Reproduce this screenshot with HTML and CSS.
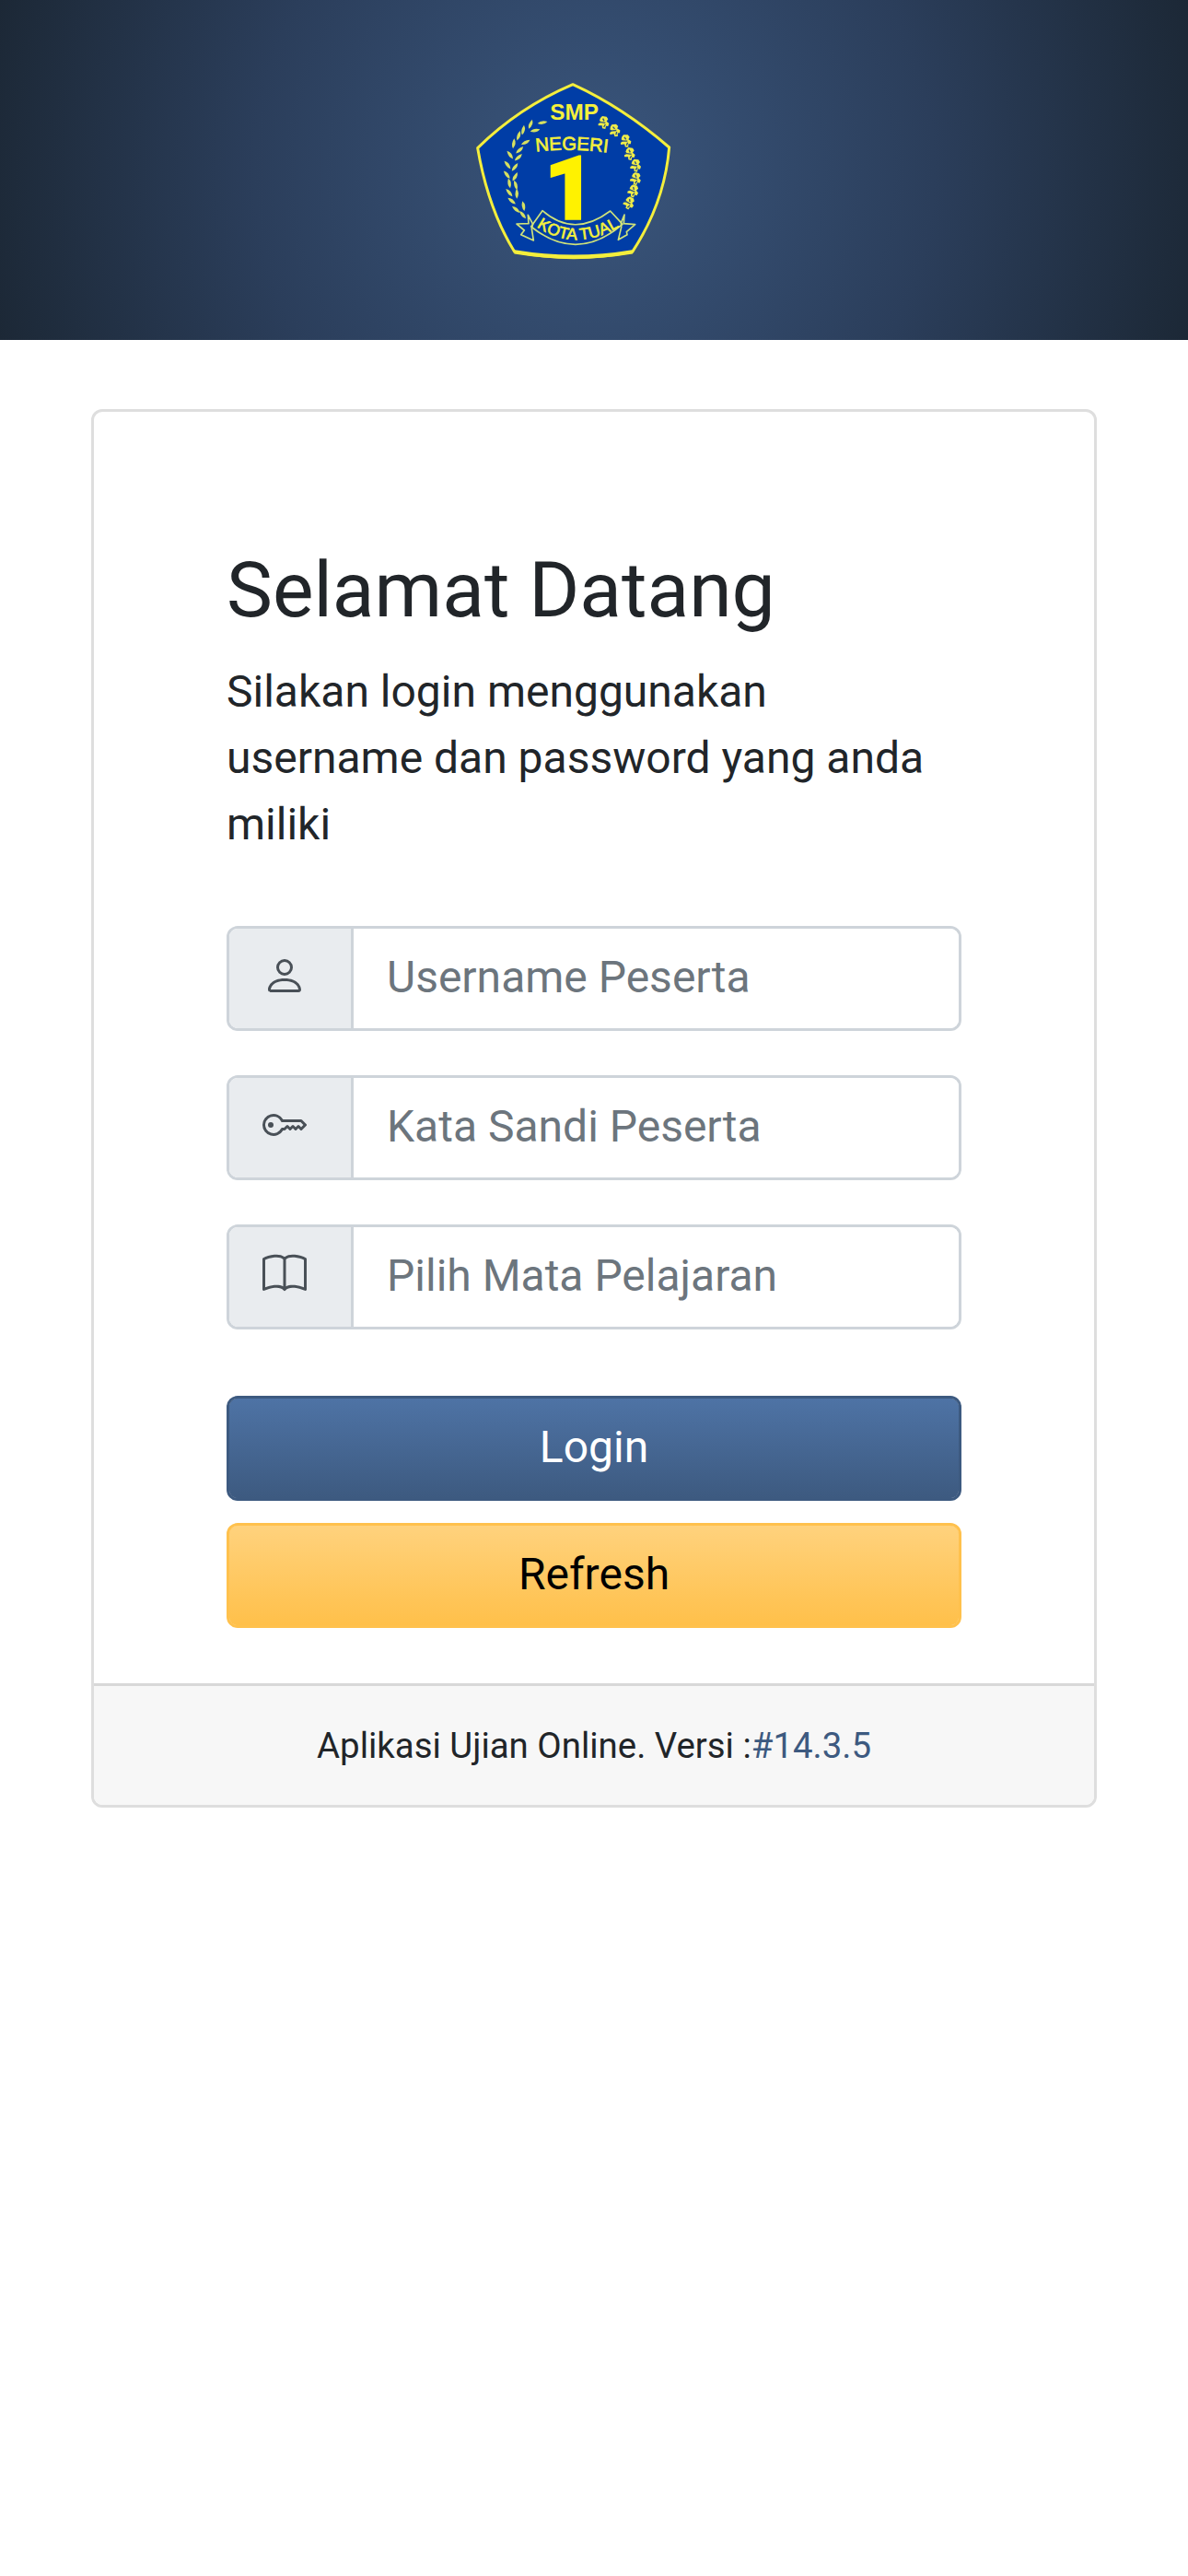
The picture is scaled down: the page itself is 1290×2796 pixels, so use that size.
FILE: index.html
```html
<!DOCTYPE html>
<html lang="id">
<head>
    <meta charset="utf-8">
    <meta name="viewport" content="width=device-width, initial-scale=1.0">
    <title>Login Peserta</title>
    <link rel="stylesheet" href="styles.css">
</head>
<body>
    <header class="banner">
        <svg class="logo" viewBox="0 0 720 630" role="img" aria-label="SMP Negeri 1 Kota Tual">
            <defs>
                <path id="arcTop" d="M246 254 Q365 240 500 260"/>
                <path id="arcRibbon" d="M248 498 Q384 592 546 480"/>
                <g id="leaf">
                    <path d="M-2 3 Q4 -12 26 -14 Q19 4 -2 3Z"/>
                </g>
                <g id="grain">
                    <path d="M-10 -16 L-4 -22 L10 -20 L15 -12 L10 -5 L18 2 L15 11 L8 10 L6 20 L-4 18 L-5 9 L-17 9 L-17 3 L-8 -2 L-13 -8Z"/>
                    <path class="vein" d="M-14 -3 L6 0 M-2 -14 L2 -6 M6 5 L1 14"/>
                </g>
            </defs>
            <path class="shield" d="M366 35 Q530 110 680 240 Q665 420 560 580 Q370 618 176 580 Q90 440 56 242 Q190 110 366 35Z"/>
            <path class="base" d="M176 580 Q370 612 560 580"/>

            <g class="leaves">
                <use href="#leaf" transform="translate(254 160) rotate(20)"/>
                <use href="#leaf" transform="translate(222 176) rotate(-38)"/>
                <use href="#leaf" transform="translate(230 186) rotate(18)"/>
                <use href="#leaf" transform="translate(200 196) rotate(-48)"/>
                <use href="#leaf" transform="translate(184 214) rotate(-42)"/>
                <use href="#leaf" transform="translate(200 228) rotate(2)"/>
                <use href="#leaf" transform="translate(170 240) rotate(-52)"/>
                <use href="#leaf" transform="translate(182 256) rotate(-12)"/>
                <use href="#leaf" transform="translate(168 276) rotate(-96)"/>
                <use href="#leaf" transform="translate(178 280) rotate(-12)"/>
                <use href="#leaf" transform="translate(160 308) rotate(-98)"/>
                <use href="#leaf" transform="translate(168 314) rotate(-22)"/>
                <use href="#leaf" transform="translate(158 340) rotate(-98)"/>
                <use href="#leaf" transform="translate(170 346) rotate(-30)"/>
                <use href="#leaf" transform="translate(160 370) rotate(-70)"/>
                <use href="#leaf" transform="translate(182 376) rotate(-76)"/>
                <use href="#leaf" transform="translate(166 398) rotate(-100)"/>
                <use href="#leaf" transform="translate(182 404) rotate(-60)"/>
                <use href="#leaf" transform="translate(176 424) rotate(-110)"/>
                <use href="#leaf" transform="translate(190 452) rotate(-110)"/>
                <use href="#leaf" transform="translate(206 444) rotate(-70)"/>
                <use href="#leaf" transform="translate(210 470) rotate(-100)"/>
            </g>

            <g class="grains">
                <use href="#grain" transform="translate(466 160)"/>
                <use href="#grain" transform="translate(502 186) rotate(-14)"/>
                <use href="#grain" transform="translate(538 220) rotate(-8)"/>
                <use href="#grain" transform="translate(551 262)"/>
                <use href="#grain" transform="translate(570 300)"/>
                <use href="#grain" transform="translate(570 343) rotate(8)"/>
                <use href="#grain" transform="translate(562 383) rotate(12)"/>
                <use href="#grain" transform="translate(548 422) rotate(20)"/>
            </g>

            <text class="logo-name" x="371" y="151">SMP</text>
            <text class="logo-arc"><textPath href="#arcTop">NEGERI</textPath></text>
            <text class="logo-number" x="356" y="473">1</text>

            <g class="ribbon">
                <path d="M267 446 Q370 536 488 447 L528 490 Q380 618 230 498Z"/>
                <path d="M236 490 L220 460 L222 488 L183 489 L208 510 L197 524 L238 543 L232 504 Z"/>
                <path d="M523 486 L534 459 L532 488 L569 491 L541 515 L543 524 L514 541 L524 500 Z"/>
            </g>
            <text class="logo-city"><textPath href="#arcRibbon">KOTA TUAL</textPath></text>
        </svg>
    </header>

    <main class="container">
        <div class="card">
            <form class="card-body">
                <h1>Selamat Datang</h1>
                <p class="intro">Silakan login menggunakan username dan password yang anda miliki</p>

                <div class="input-group">
                    <label class="addon" for="username" aria-label="Username Peserta">
                        <svg class="icon" viewBox="0 0 16 16"><path d="M8 8a3 3 0 1 0 0-6 3 3 0 0 0 0 6zm2-3a2 2 0 1 1-4 0 2 2 0 0 1 4 0zm4 8c0 1-1 1-1 1H3s-1 0-1-1 1-4 6-4 6 3 6 4zm-1-.004c-.001-.246-.154-.986-.832-1.664C11.516 10.68 10.289 10 8 10c-2.29 0-3.516.68-4.168 1.332-.678.678-.83 1.418-.832 1.664h10z"/></svg>
                    </label>
                    <input type="text" id="username" name="username" placeholder="Username Peserta">
                </div>

                <div class="input-group">
                    <label class="addon" for="password" aria-label="Kata Sandi Peserta">
                        <svg class="icon" viewBox="0 0 16 16"><path d="M0 8a4 4 0 0 1 7.465-2H14a.5.5 0 0 1 .354.146l1.5 1.5a.5.5 0 0 1 0 .708l-1.5 1.5a.5.5 0 0 1-.708 0L13 9.207l-.646.647a.5.5 0 0 1-.708 0L11 9.207l-.646.647a.5.5 0 0 1-.708 0L9 9.207l-.646.647A.5.5 0 0 1 8 10h-.535A4 4 0 0 1 0 8zm4-3a3 3 0 1 0 2.712 4.285A.5.5 0 0 1 7.163 9h.63l.853-.854a.5.5 0 0 1 .708 0l.646.647.646-.647a.5.5 0 0 1 .708 0l.646.647.646-.647a.5.5 0 0 1 .708 0l.646.647.793-.793-1-1h-6.63a.5.5 0 0 1-.451-.285A3 3 0 0 0 4 5z"/><path d="M4 8a1 1 0 1 1-2 0 1 1 0 0 1 2 0z"/></svg>
                    </label>
                    <input type="password" id="password" name="password" placeholder="Kata Sandi Peserta">
                </div>

                <div class="input-group">
                    <label class="addon" for="mapel" aria-label="Pilih Mata Pelajaran">
                        <svg class="icon" viewBox="0 0 16 16"><path d="M1 2.828c.885-.37 2.154-.769 3.388-.893 1.33-.134 2.458.063 3.112.752v9.746c-.935-.53-2.12-.603-3.213-.493-1.18.12-2.37.461-3.287.811V2.828zm7.5-.141c.654-.689 1.782-.886 3.112-.752 1.234.124 2.503.523 3.388.893v9.923c-.918-.35-2.107-.692-3.287-.81-1.094-.111-2.278-.039-3.213.492V2.687zM8 1.783C7.015.936 5.587.81 4.287.94c-1.514.153-3.042.672-3.994 1.105A.5.5 0 0 0 0 2.5v11a.5.5 0 0 0 .707.455c.882-.4 2.303-.881 3.68-1.02 1.409-.142 2.59.087 3.223.877a.5.5 0 0 0 .78 0c.633-.79 1.814-1.019 3.222-.877 1.378.139 2.8.62 3.681 1.02A.5.5 0 0 0 16 13.5v-11a.5.5 0 0 0-.293-.455c-.952-.433-2.48-.952-3.994-1.105C10.413.809 8.985.936 8 1.783z"/></svg>
                    </label>
                    <input type="text" id="mapel" name="mapel" placeholder="Pilih Mata Pelajaran">
                </div>

                <div class="actions">
                    <button type="submit" class="btn btn-primary">Login</button>
                    <button type="button" class="btn btn-warning">Refresh</button>
                </div>
            </form>
            <footer class="card-footer">Aplikasi Ujian Online. Versi :<a href="#">#14.3.5</a></footer>
        </div>
    </main>
</body>
</html>
```

FILE: styles.css
```css
* { box-sizing: border-box; }

body {
    margin: 0;
    background: #fff;
    color: #212529;
    font-family: Roboto, "Liberation Sans", sans-serif;
    font-size: 48px;
    line-height: 72px;
}

/* header */
.banner {
    display: flex;
    justify-content: center;
    align-items: center;
    min-height: 369px;
    padding-right: 50px;
    background: radial-gradient(circle, #3a567d, #2b3e5b 55%, #1c2836);
}

.logo { width: 240px; height: 210px; }
.shield { fill: #003da6; stroke: #f4ee3c; stroke-width: 9; stroke-linejoin: round; }
.base { fill: none; stroke: #f4ee3c; stroke-width: 13; }
.logo text { font-family: "Liberation Sans", Arial, sans-serif; fill: #f4f03c; }
.logo .logo-name { font-size: 73px; font-weight: bold; text-anchor: middle; }
.logo .logo-arc { font-size: 61px; stroke: #f4f03c; stroke-width: 2; }
.logo .logo-number { font-family: Roboto, sans-serif; font-size: 290px; font-weight: 900; text-anchor: middle; fill: #fff200; stroke: #fff200; stroke-width: 5; }
.logo .logo-city { font-size: 53px; stroke: #f4f03c; stroke-width: 2; }
.leaves { fill: #d6e060; }
.grains { fill: #efec48; }
.vein { fill: none; stroke: #2b5380; stroke-width: 4; }
.ribbon { fill: none; stroke: #cfe27a; stroke-width: 5; stroke-linejoin: round; }

/* login card */
.container { padding: 75px 99px; }

.card {
    border: 3px solid #dedede;
    border-radius: 12px;
    background: #fff;
    overflow: hidden;
}

.card-body { padding: 144px 144px 60px; }

h1 {
    margin: 0 0 24px;
    font-size: 84px;
    font-weight: 400;
    line-height: 100px;
}

.intro { margin: 0 0 74px; }

.input-group {
    display: flex;
    height: 114px;
    margin-bottom: 48px;
    border: 3px solid #ced4da;
    border-radius: 12px;
    overflow: hidden;
}

.addon {
    display: flex;
    flex: none;
    width: 135px;
    padding: 27px 36px;
    border-right: 3px solid #ced4da;
    background: #e9ecef;
}

.icon { width: 48px; height: 48px; fill: #495057; }

.input-group input {
    flex: 1;
    min-width: 0;
    padding: 0 36px 2px;
    border: 0;
    outline: 0;
    background: #fff;
    color: #495057;
    font: inherit;
}

.input-group input::placeholder { color: #6c757d; opacity: 1; }

.actions {
    display: grid;
    gap: 24px;
    margin-top: 72px;
}

.btn {
    height: 114px;
    padding: 0 36px 2px;
    border: 3px solid;
    border-radius: 12px;
    font: inherit;
    cursor: pointer;
}

.btn-primary {
    border-color: #3d5a80;
    background: linear-gradient(#4e73a5, #3d5a80) padding-box #3d5a80;
    color: #fff;
}

.btn-warning {
    border-color: #ffc14d;
    background: linear-gradient(#ffd27d, #ffc04a) padding-box #ffc14d;
    color: #000;
}

.card-footer {
    padding: 36px;
    border-top: 3px solid #d8d8d8;
    background: #f7f7f7;
    font-size: 80%;
    line-height: 57px;
    text-align: center;
}

.card-footer a { color: #3d5a80; text-decoration: none; }
```
